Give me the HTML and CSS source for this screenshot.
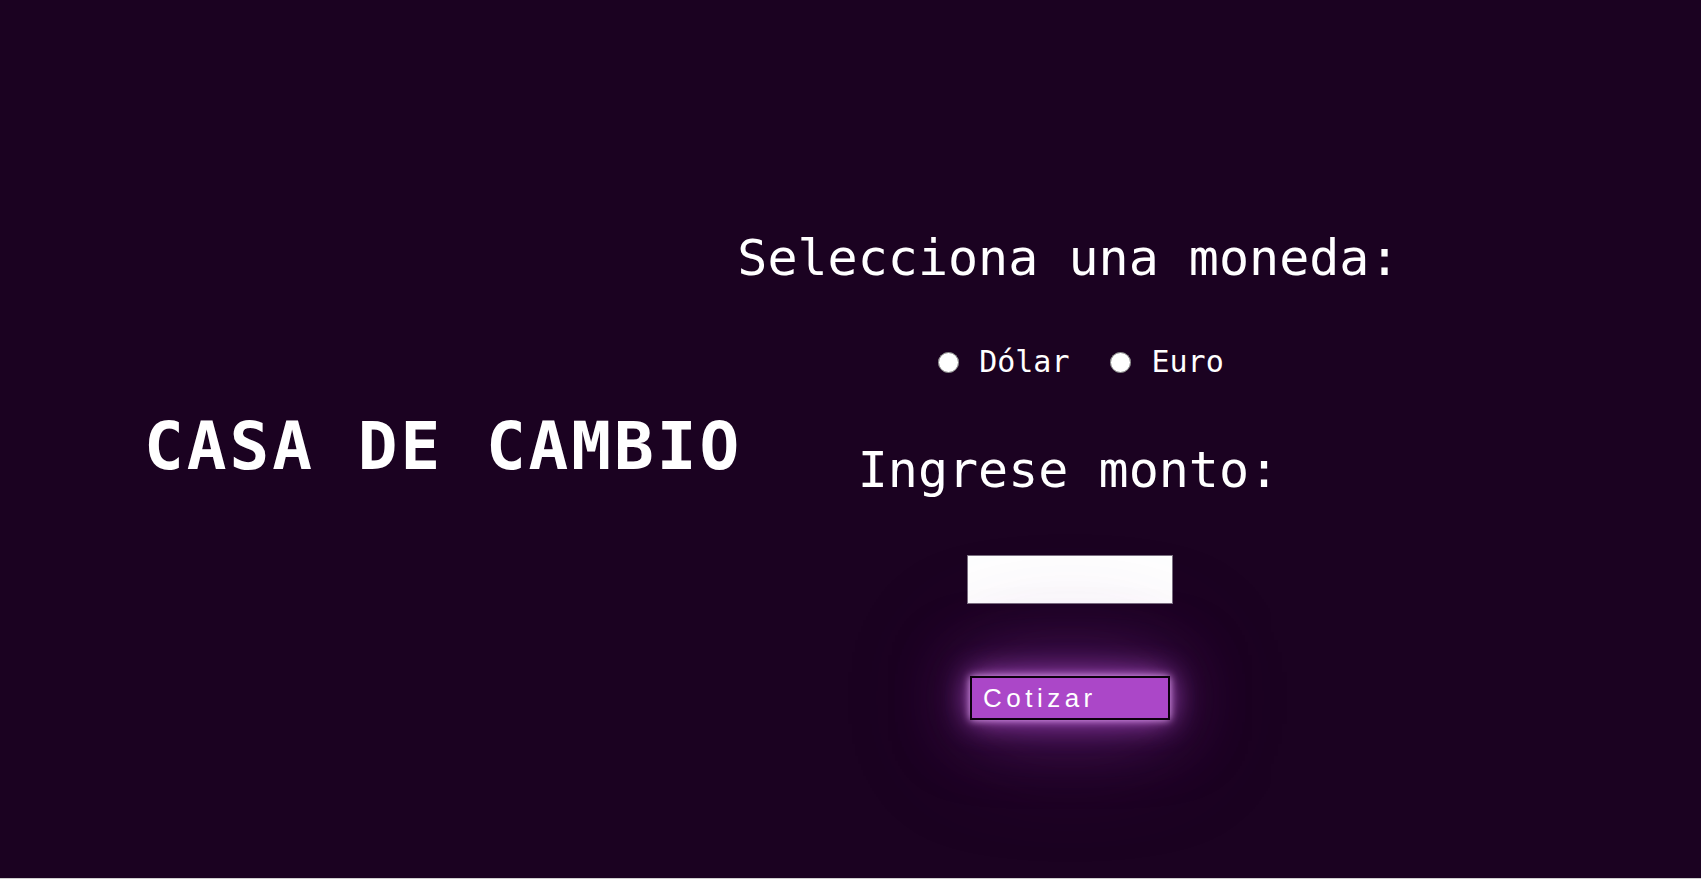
FILE: index.html
```html
<!DOCTYPE html>
<html lang="es">
<head>
<meta charset="utf-8">
<title>Casa de Cambio</title>
<link rel="stylesheet" href="styles.css">
</head>
<body>
<main class="page">
  <h1 class="brand">CASA DE CAMBIO</h1>
  <form class="panel">
    <h2 class="panel-title">Selecciona una moneda:</h2>
    <div class="options">
      <label class="option"><input type="radio" name="moneda" value="dolar"><span>Dólar</span></label>
      <label class="option"><input type="radio" name="moneda" value="euro"><span>Euro</span></label>
    </div>
    <h2 class="panel-title panel-title--amount">Ingrese monto:</h2>
    <input class="amount" type="text">
    <button class="quote" type="button">Cotizar</button>
  </form>
</main>
</body>
</html>
```
FILE: styles.css
```css
html {
  background: #cfcfcf;
}
body {
  margin: 0;
}
.page {
  box-sizing: border-box;
  height: 878px;
  background: #1b0221;
  display: flex;
  align-items: flex-start;
  padding: 233px 0 0 144px;
  color: #ffffff;
  font-family: "DejaVu Sans Mono", monospace;
  overflow: hidden;
}
.brand {
  margin: 181px -5px 0 0;
  font-size: 66px;
  line-height: 1;
  font-weight: bold;
  letter-spacing: 3px;
  white-space: nowrap;
}
.panel {
  display: flex;
  flex-direction: column;
  align-items: center;
  margin: 0;
}
.panel-title {
  margin: 0;
  font-size: 50px;
  line-height: 1;
  font-weight: normal;
  white-space: nowrap;
}
.panel-title--amount {
  margin-top: 68px;
}
.options {
  margin-top: 64px;
  display: flex;
  align-items: center;
  height: 30px;
  padding-left: 25px;
}
.option {
  display: flex;
  align-items: center;
  gap: 20px;
  font-size: 30px;
  line-height: 1;
}
.option + .option {
  margin-left: 41px;
}
.option input {
  margin: 0;
  width: 21px;
  height: 21px;
}
.amount {
  box-sizing: border-box;
  margin: 60px 0 0 3px;
  width: 206px;
  height: 49px;
  border: 1px solid #7a6f80;
  background: #ffffff;
  padding: 0 6px;
  font-size: 18px;
}
.quote {
  box-sizing: border-box;
  margin: 72px 0 0 3px;
  width: 200px;
  height: 44px;
  border: 2px solid #0c000e;
  background: #ab47c8;
  color: #ffffff;
  font-family: "Liberation Sans", Arial, sans-serif;
  font-size: 26px;
  letter-spacing: 4.5px;
  text-align: left;
  padding: 0 0 0 11px;
  box-shadow: 0 0 8px rgba(240, 175, 255, 0.9), 0 0 30px rgba(205, 95, 235, 0.8), 0 0 75px rgba(155, 55, 185, 0.65), 0 0 130px rgba(110, 30, 140, 0.45);
}
```
